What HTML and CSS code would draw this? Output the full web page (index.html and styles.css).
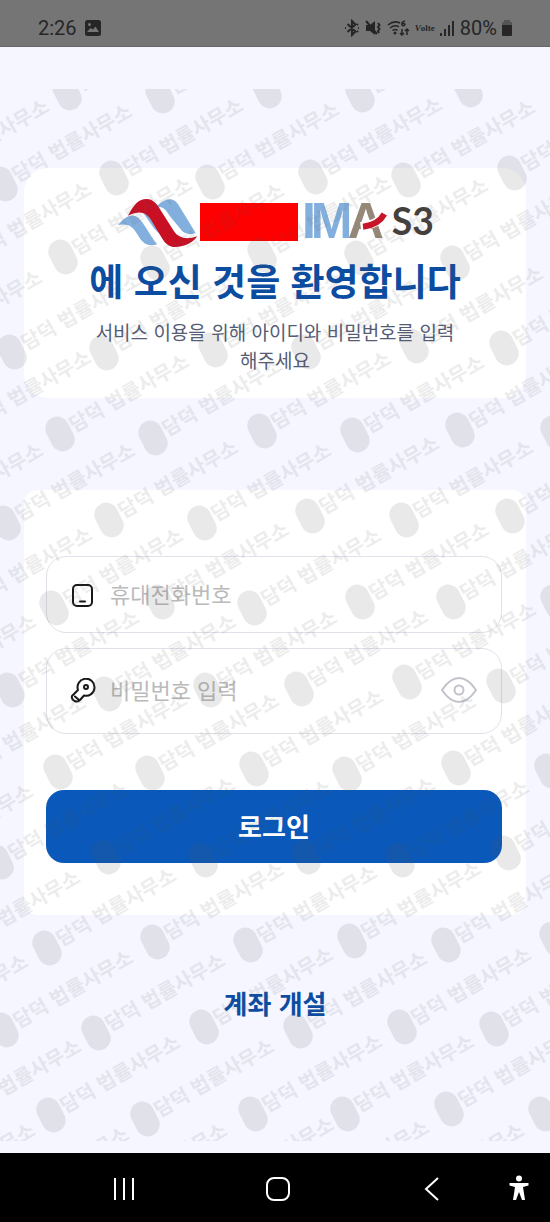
FILE: index.html
```html
<!DOCTYPE html>
<html lang="ko">
<head>
<meta charset="utf-8">
<meta name="viewport" content="width=device-width, initial-scale=1">
<title>로그인</title>
<link rel="stylesheet" href="styles.css">
</head>
<body>
<header class="status">
  <span class="status-text">2:26</span>
  <svg class="status-photo" width="16" height="16" viewBox="0 0 16 16" aria-hidden="true"><path fill-rule="evenodd" d="M2.500 0h11A2.500 2.500 0 0 1 16 2.500v11a2.500 2.500 0 0 1-2.500 2.500h-11A2.500 2.500 0 0 1 0 13.500v-11A2.500 2.500 0 0 1 2.500 0zM2 12h12L10.500 6.500 8 9.500 5.500 8zM4.500 3a1.500 1.500 0 1 0 0 3 1.500 1.500 0 0 0 0-3z"/></svg>
  <div class="status-icons">
    <svg width="16" height="18" viewBox="0 0 16 18" aria-hidden="true"><path class="line" d="M3.500 5l8 7.500L8 16V2l3.500 3.500-8 7.500M1 9h1M14 9h1M13 6l1-1M13 12l1 1"/></svg>
    <svg width="17" height="18" viewBox="0 0 17 18" aria-hidden="true"><path d="M1 6h4l5-4v14l-5-4H1z"/><path class="line" d="M1 2l11 13M13 4l1.500 2L13 8l1.500 2L13 12l1 2"/></svg>
    <svg width="23" height="18" viewBox="0 0 23 18" aria-hidden="true"><path class="line thin" d="M1 6q6-5 12-2M3 9q5-4 9-1M5.500 11.500q3-2 5 0M18 2q-4 1-3 4 2 2 3-.500-1-2-3 0M15 10v6m-2-2l2 2 2-2M20 16v-6m-2 2l2-2 2 2"/><circle cx="8" cy="14" r="1.500"/></svg>
    <span class="volte"><i>V</i>olte</span>
    <svg width="15" height="18" viewBox="0 0 15 18" aria-hidden="true"><path d="M0 14h2v3H0zM4 10h2v7H4zM8 6h2v11H8zM12 2h2v15h-2z"/></svg>
    <span class="battery"><span class="status-text">80%</span>
    <svg width="12" height="18" viewBox="0 0 12 18" aria-hidden="true"><path class="faded" d="M3 1h6v2h2v5H1V3h2z"/><path d="M1 6h10v10q0 1-1 1H2q-1 0-1-1z"/></svg></span>
  </div>
</header>

<main class="screen">
  <section class="card welcome">
    <svg class="logo" viewBox="57 48 942 150" role="img" aria-label="IMA S3">
      <path fill="#82afdd" d="M172 77C187 62 202 53 216 55 230 57 238 70 246 84L290 156C276 162 262 160 250 151L213 106C200 84 192 76 172 77z"/>
      <path fill="#82afdd" d="M57 132C74 113 88 102 104 104 128 107 143 150 175 190 151 197 134 190 122 171 102 137 92 126 57 132z"/>
      <path fill="#82afdd" d="M132 95C151 103 158 110 166 122L190 163C180 157 172 151 165 142z"/>
      <path fill="#c90f24" d="M87 104C105 70 119 54 143 54 162 54 174 69 184 86L225 151C238 170 261 178 295 166 278 189 252 198 229 198 211 198 199 188 190 173L153 112C139 92 120 88 87 104z"/>
      <path fill="#f00" d="M303 66h294v114H303z"/>
      <text class="logo-ima" y="171"><tspan class="sky" x="609">I</tspan><tspan class="sky" x="635">M</tspan><tspan class="taupe" x="746">A</tspan></text>
      <path fill="none" stroke="#fff" stroke-width="26" d="M785 137Q838 130 860 98"/>
      <path fill="none" stroke="#c91528" stroke-width="18" d="M792 137Q838 132 856 99"/>
      <text class="logo-s3" x="878" y="162">S3</text>
    </svg>
    <h1>에 오신 것을 환영합니다</h1>
    <p>서비스 이용을 위해 아이디와 비밀번호를 입력<br>해주세요</p>
  </section>

  <form class="card login">
    <label class="field phone">
      <svg width="26" height="26" viewBox="0 0 26 26" aria-hidden="true"><rect x="3" y="3" width="19" height="21" rx="4"/><path d="M10 19.500h5"/></svg>
      <input type="tel" placeholder="휴대전화번호" aria-label="휴대전화번호">
    </label>
    <div class="field password">
      <svg width="26" height="26" viewBox="0 0 26 26" aria-hidden="true"><path d="M8 12A8.500 8.500 0 1 1 14 17.500L10 22Q8 24.500 4.500 23 1 21 2 18zM5 18.500l4 3.500"/><circle cx="16" cy="9" r="2"/></svg>
      <input type="password" placeholder="비밀번호 입력" aria-label="비밀번호 입력">
      <button class="reveal" type="button" aria-label="비밀번호 표시"><svg width="36" height="28" viewBox="0 0 36 28" aria-hidden="true"><path d="M1 13Q9 1 18 1T35 13Q27 25 18 25T1 13z"/><circle cx="18" cy="13" r="4.500"/></svg></button>
    </div>
    <button class="submit" type="submit">로그인</button>
  </form>

  <a class="signup" href="#signup">계좌 개설</a>

  <svg class="watermark" aria-hidden="true">
    <defs><g id="mark"><rect x="-12" y="-18" width="24" height="36" rx="12" transform="rotate(-27)"/><text x="13" y="6" transform="rotate(-30)">담덕 법률사무소</text></g></defs>
    <use href="#mark" x="-34" y="8"/><use href="#mark" x="67" y="4"/><use href="#mark" x="160" y="7"/><use href="#mark" x="267" y="2"/><use href="#mark" x="360" y="6"/><use href="#mark" x="468" y="1"/>
    <use href="#mark" x="-80" y="90"/><use href="#mark" x="3" y="95"/><use href="#mark" x="114" y="89"/><use href="#mark" x="210" y="93"/><use href="#mark" x="313" y="88"/><use href="#mark" x="406" y="91"/><use href="#mark" x="512" y="84"/>
    <use href="#mark" x="-38" y="173"/><use href="#mark" x="63" y="168"/><use href="#mark" x="155" y="174"/><use href="#mark" x="262" y="166"/><use href="#mark" x="359" y="169"/><use href="#mark" x="455" y="174"/>
    <use href="#mark" x="-87" y="261"/><use href="#mark" x="12" y="263"/><use href="#mark" x="104" y="264"/><use href="#mark" x="213" y="261"/><use href="#mark" x="306" y="263"/><use href="#mark" x="414" y="257"/><use href="#mark" x="504" y="259"/>
    <use href="#mark" x="-38" y="341"/><use href="#mark" x="60" y="345"/><use href="#mark" x="153" y="349"/><use href="#mark" x="262" y="342"/><use href="#mark" x="355" y="346"/><use href="#mark" x="460" y="341"/><use href="#mark" x="555" y="344"/>
    <use href="#mark" x="-86" y="434"/><use href="#mark" x="6" y="434"/><use href="#mark" x="109" y="431"/><use href="#mark" x="202" y="434"/><use href="#mark" x="310" y="427"/><use href="#mark" x="404" y="431"/><use href="#mark" x="510" y="427"/>
    <use href="#mark" x="-37" y="518"/><use href="#mark" x="54" y="519"/><use href="#mark" x="160" y="513"/><use href="#mark" x="252" y="519"/><use href="#mark" x="360" y="513"/><use href="#mark" x="451" y="513"/><use href="#mark" x="555" y="513"/>
    <use href="#mark" x="-93" y="605"/><use href="#mark" x="10" y="601"/><use href="#mark" x="107" y="605"/><use href="#mark" x="208" y="601"/><use href="#mark" x="299" y="600"/><use href="#mark" x="407" y="593"/><use href="#mark" x="501" y="597"/>
    <use href="#mark" x="-43" y="686"/><use href="#mark" x="58" y="683"/><use href="#mark" x="150" y="684"/><use href="#mark" x="254" y="680"/><use href="#mark" x="347" y="685"/><use href="#mark" x="456" y="679"/><use href="#mark" x="549" y="682"/>
    <use href="#mark" x="-96" y="775"/><use href="#mark" x="-1" y="773"/><use href="#mark" x="106" y="768"/><use href="#mark" x="203" y="771"/><use href="#mark" x="306" y="768"/><use href="#mark" x="400" y="771"/><use href="#mark" x="506" y="764"/>
    <use href="#mark" x="-49" y="861"/><use href="#mark" x="47" y="859"/><use href="#mark" x="155" y="853"/><use href="#mark" x="248" y="856"/><use href="#mark" x="352" y="852"/><use href="#mark" x="446" y="856"/><use href="#mark" x="554" y="850"/>
    <use href="#mark" x="-101" y="945"/><use href="#mark" x="4" y="941"/><use href="#mark" x="96" y="944"/><use href="#mark" x="204" y="938"/><use href="#mark" x="298" y="942"/><use href="#mark" x="402" y="938"/><use href="#mark" x="494" y="940"/>
    <use href="#mark" x="-48" y="1030"/><use href="#mark" x="51" y="1026"/><use href="#mark" x="145" y="1030"/><use href="#mark" x="253" y="1025"/><use href="#mark" x="345" y="1025"/><use href="#mark" x="449" y="1020"/><use href="#mark" x="543" y="1025"/>
    <use href="#mark" x="-94" y="1114"/><use href="#mark" x="0" y="1118"/><use href="#mark" x="98" y="1114"/><use href="#mark" x="205" y="1108"/><use href="#mark" x="300" y="1111"/><use href="#mark" x="395" y="1114"/>
  </svg>
</main>

<nav class="navbar" aria-label="시스템">
  <button type="button" aria-label="최근 앱"><svg width="24" height="24" viewBox="0 0 24 24"><path d="M3 1v22M12 1v22M21 1v22"/></svg></button>
  <button type="button" aria-label="홈"><svg width="24" height="24" viewBox="0 0 24 24"><rect x="1" y="1" width="22" height="22" rx="7"/></svg></button>
  <button type="button" aria-label="뒤로"><svg width="24" height="24" viewBox="0 0 24 24"><path d="M18 1L6 12l12 11"/></svg></button>
  <button class="access" type="button" aria-label="접근성"><svg width="20" height="26" viewBox="0 0 20 26"><circle cx="10" cy="3.500" r="3"/><path d="M0.500 8h19v2.500L14 12l2 13h-3l-3-8-3 8H4l2-13-5.500-1.500z"/></svg></button>
</nav>
</body>
</html>
```
FILE: styles.css
```css
* { box-sizing: border-box; }

body {
  margin: 0;
  min-height: 100vh;
  display: flex;
  flex-direction: column;
  background: #f5f6ff;
  font-family: "Noto Sans CJK KR", sans-serif;
}

button { border: 0; padding: 0; background: none; font: inherit; cursor: pointer; }

.status {
  display: flex;
  align-items: center;
  height: 47px;
  padding: 9px 37px 0 38px;
  background: #757575;
  border-bottom: 1px solid #666;
  color: #262626;
  fill: #262626;
}
.status-text { font: 20px/24px Roboto, sans-serif; }
.status-photo { margin-left: 8px; }
.status-icons { display: flex; align-items: center; gap: 5px; margin-left: auto; }
.status svg { flex: none; }
.battery { display: flex; align-items: center; gap: 4px; }
.line { fill: none; stroke: #262626; stroke-width: 2; }
.thin { stroke-width: 1.5; }
.faded { fill: #555; }
.volte { font: bold 9px/12px "Liberation Serif", serif; }

.screen {
  position: relative;
  flex: 1;
  display: flex;
  flex-direction: column;
  padding: 121px 24px 0;
}

.card { background: #fff; }

.welcome {
  padding: 29px 60px 24px;
  border-radius: 24px;
  text-align: center;
}
.logo { display: block; width: 314px; height: 50px; margin: 0 auto; overflow: visible; }
.logo-ima { font: bold 150px "Liberation Sans", sans-serif; }
.logo-s3 { font: bold 112px Lato, sans-serif; fill: #46403d; }
.sky { fill: #82afdd; }
.taupe { fill: #958879; }

h1 {
  margin: 5px -20px 10px;
  color: #0c4da2;
  font-size: 37px;
  line-height: 56px;
  font-weight: 700;
}
.welcome p {
  margin: 0 -20px;
  color: #555c75;
  font-size: 19px;
  line-height: 28px;
}

.login {
  display: flex;
  flex-direction: column;
  margin-top: 92px;
  padding: 66px 24px 52px 22px;
  border-radius: 14px;
}
.field {
  display: flex;
  align-items: center;
  gap: 14px;
  padding: 0 24px 0 23px;
  border: 1px solid #e0e2ea;
  border-radius: 20px;
}
.phone { height: 77px; }
.password { height: 86px; margin-top: 15px; }
.field svg { flex: none; fill: none; stroke: #181818; stroke-width: 2; stroke-linecap: round; stroke-linejoin: round; }
.field input {
  flex: 1;
  min-width: 0;
  padding: 0 0 4px;
  border: 0;
  outline: 0;
  background: none;
  color: #222;
  font: 22px/32px "Noto Sans CJK KR", sans-serif;
}
.field input::placeholder { color: #bababa; opacity: 1; }
.field .reveal svg { display: block; stroke: #c0c3ca; }

.submit {
  height: 73px;
  margin-top: 56px;
  padding-bottom: 3px;
  border-radius: 18px;
  background: #0a59ba;
  color: #fff;
  font-size: 26px;
  font-weight: 700;
}

.signup {
  align-self: center;
  margin: 68px 0 130px;
  color: #0c4da2;
  font-size: 26px;
  line-height: 40px;
  font-weight: 700;
  text-decoration: none;
}

.watermark {
  position: absolute;
  inset: 42px 0 12px;
  width: 100%;
  height: calc(100% - 54px);
  overflow: hidden;
  pointer-events: none;
  fill: #555;
  opacity: 0.12;
  font: bold 20px "Noto Sans CJK KR", sans-serif;
}
.watermark text { opacity: 0.85; }

.navbar {
  display: flex;
  align-items: center;
  justify-content: space-between;
  position: relative;
  height: 69px;
  padding: 2px 106px 0 112px;
  background: #000;
}
.navbar svg { display: block; fill: none; stroke: #fff; stroke-width: 2; }
.navbar .access { position: absolute; right: 21px; top: 22px; }
.navbar .access svg { fill: #fff; stroke: none; }
```
